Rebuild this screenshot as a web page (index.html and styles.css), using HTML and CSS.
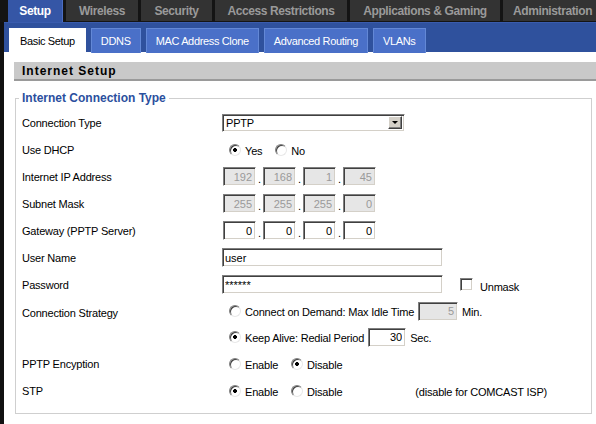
FILE: index.html
```html
<!DOCTYPE html>
<html>
<head>
<meta charset="utf-8">
<link rel="stylesheet" href="styles.css">
</head>
<body>
<div class="topbar">
  <div class="tab active t-setup">Setup</div>
  <div class="tab t-wireless">Wireless</div>
  <div class="tab t-security">Security</div>
  <div class="tab t-access">Access Restrictions</div>
  <div class="tab t-apps">Applications &amp; Gaming</div>
  <div class="tab t-admin">Administration</div>
</div>
<div class="main">
  <div class="subbar">
    <div class="subtab active">Basic Setup</div>
    <div class="subtab">DDNS</div>
    <div class="subtab">MAC Address Clone</div>
    <div class="subtab">Advanced Routing</div>
    <div class="subtab">VLANs</div>
  </div>
  <div class="content">
    <div class="section-head">Internet Setup</div>
    <fieldset class="group">
      <legend>Internet Connection Type</legend>

      <div class="row">
        <div class="label">Connection Type</div>
        <div class="value">
          <div class="select"><span class="select-text">PPTP</span><span class="select-btn"><span class="arrow"></span></span></div>
        </div>
      </div>

      <div class="row">
        <div class="label">Use DHCP</div>
        <div class="value opts">
          <label class="opt"><input type="radio" name="dhcp" checked><span>Yes</span></label>
          <label class="opt"><input type="radio" name="dhcp"><span>No</span></label>
        </div>
      </div>

      <div class="row">
        <div class="label">Internet IP Address</div>
        <div class="value ip">
          <input class="field oct" value="192" disabled><span class="dot">.</span><input class="field oct" value="168" disabled><span class="dot">.</span><input class="field oct" value="1" disabled><span class="dot">.</span><input class="field oct" value="45" disabled>
        </div>
      </div>

      <div class="row">
        <div class="label">Subnet Mask</div>
        <div class="value ip">
          <input class="field oct" value="255" disabled><span class="dot">.</span><input class="field oct" value="255" disabled><span class="dot">.</span><input class="field oct" value="255" disabled><span class="dot">.</span><input class="field oct" value="0" disabled>
        </div>
      </div>

      <div class="row">
        <div class="label">Gateway (PPTP Server)</div>
        <div class="value ip">
          <input class="field oct" value="0"><span class="dot">.</span><input class="field oct" value="0"><span class="dot">.</span><input class="field oct" value="0"><span class="dot">.</span><input class="field oct" value="0">
        </div>
      </div>

      <div class="row">
        <div class="label">User Name</div>
        <div class="value">
          <input class="field wide" value="user">
        </div>
      </div>

      <div class="row">
        <div class="label">Password</div>
        <div class="value">
          <input class="field wide" value="******">
          <label class="check"><input type="checkbox"><span>Unmask</span></label>
        </div>
      </div>

      <div class="row multi">
        <div class="label">Connection Strategy</div>
        <div class="value lines">
          <div class="line opts">
            <label class="opt"><input type="radio" name="strat"><span>Connect on Demand: Max Idle Time</span></label>
            <input class="field num idle" value="5" disabled><span class="unit">Min.</span>
          </div>
          <div class="line opts">
            <label class="opt"><input type="radio" name="strat" checked><span>Keep Alive: Redial Period</span></label>
            <input class="field num redial" value="30"><span class="unit">Sec.</span>
          </div>
        </div>
      </div>

      <div class="row">
        <div class="label">PPTP Encyption</div>
        <div class="value opts">
          <label class="opt"><input type="radio" name="enc"><span>Enable</span></label>
          <label class="opt"><input type="radio" name="enc" checked><span>Disable</span></label>
        </div>
      </div>

      <div class="row">
        <div class="label">STP</div>
        <div class="value opts">
          <label class="opt"><input type="radio" name="stp" checked><span>Enable</span></label>
          <label class="opt"><input type="radio" name="stp"><span>Disable</span></label>
          <span class="note">(disable for COMCAST ISP)</span>
        </div>
      </div>
    </fieldset>
  </div>
</div>
</body>
</html>
```
FILE: styles.css
```css
html, body {
  margin: 0;
  padding: 0;
  background: #111;
  width: 596px;
  height: 424px;
  overflow: hidden;
  font-family: "Liberation Sans", Arial, sans-serif;
  font-size: 11px;
  color: #000;
}

.topbar {
  display: flex;
  gap: 3px;
  padding-left: 8px;
  height: 22px;
  background: #141414;
  white-space: nowrap;
}

.tab {
  flex: none;
  box-sizing: border-box;
  height: 21px;
  line-height: 22px;
  text-align: center;
  background: #333;
  color: #9a9a9a;
  font-weight: bold;
  font-size: 12px;
  letter-spacing: -0.4px;
}

.tab.active {
  height: 22px;
  background: #3556a6;
  color: #fff;
  border-right: 1px solid #4b6dc2;
}

.t-setup { width: 55px; }
.t-wireless { width: 72px; }
.t-security { width: 71px; }
.t-access { width: 132px; }
.t-apps { width: 150px; }
.t-admin { width: 110px; text-align: left; padding-left: 10px; }

.main {
  margin-left: 4px;
  background: #fff;
  height: 402px;
}

.subbar {
  display: flex;
  gap: 5px;
  height: 30px;
  box-sizing: border-box;
  padding: 5px 0 0 5px;
  background: #2f519d;
  border-top: 1px solid #3a5cae;
}

.subtab {
  height: 25px;
  box-sizing: border-box;
  line-height: 24px;
  padding: 0 9px;
  background: #4a70c8;
  border: 1px solid #6388d6;
  border-bottom: none;
  color: #fff;
  white-space: nowrap;
  letter-spacing: -0.35px;
}

.subtab.active {
  padding: 0 10px;
  background: #fff;
  border-color: #fff;
  color: #000;
}

.content {
  padding: 10px 0 0 10px;
}

.section-head {
  height: 17px;
  line-height: 18px;
  padding-left: 8px;
  background: #c9c9c9;
  border-bottom: 2px solid #9a9a9a;
  font-weight: bold;
  font-size: 12px;
  letter-spacing: 1px;
}

.group {
  margin: 10px 4px 0 1px;
  padding: 4px 6px 9px 6px;
  border: 1px solid #cfcfcf;
  letter-spacing: -0.2px;
}

.group legend {
  padding: 0 3px;
  margin-left: -3px;
  color: #2b4f9e;
  font-weight: bold;
  font-size: 12px;
  line-height: 14px;
  letter-spacing: 0;
}

.row {
  display: grid;
  grid-template-columns: 200px 1fr;
  align-items: center;
  min-height: 27px;
}

.row.multi {
  align-items: start;
}

.row.multi .label {
  line-height: 26px;
  padding-top: 2px;
}

.value {
  display: flex;
  align-items: center;
}

.opts {
  gap: 13px;
  padding-left: 7px;
}

.opt {
  display: inline-flex;
  align-items: center;
  gap: 4px;
}

.opt span {
  position: relative;
  top: 1px;
}

.lines {
  flex-direction: column;
  align-items: stretch;
  padding-left: 0;
  gap: 0;
}

.line {
  display: flex;
  align-items: center;
  height: 26px;
}

.line .opt {
  margin-right: 4px;
}

.line.opts {
  gap: 0;
}

input[type="radio"] {
  appearance: none;
  margin: 0;
  width: 12px;
  height: 12px;
  border-radius: 50%;
  border: 1px solid;
  border-color: #808080 #e8e8e8 #e8e8e8 #808080;
  box-shadow: inset 1px 1px 0 #404040;
  background: #fff;
  box-sizing: border-box;
}

input[type="radio"]:checked {
  background: radial-gradient(circle at 50% 50%, #000 0, #000 1.6px, #fff 2.2px);
}

input[type="checkbox"] {
  appearance: none;
  margin: 0;
  width: 13px;
  height: 13px;
  border: 1px solid;
  border-color: #808080 #fff #fff #808080;
  box-shadow: inset 1px 1px 0 #404040, inset -1px -1px 0 #d4d0c8;
  background: #fff;
  box-sizing: border-box;
}

.check {
  display: inline-flex;
  align-items: center;
  gap: 7px;
  margin-left: 17px;
}

.check span {
  position: relative;
  top: 2px;
}

.field {
  box-sizing: border-box;
  height: 19px;
  margin: 0;
  padding: 0 3px;
  border: 1px solid;
  border-color: #7f7f7f #fff #fff #7f7f7f;
  box-shadow: inset 1px 1px 0 #404040, inset -1px -1px 0 #d4d0c8;
  background: #fff;
  font-family: "Liberation Sans", Arial, sans-serif;
  font-size: 11px;
  color: #000;
  outline: none;
}

.field:disabled {
  background: #e6e6e6;
  color: #9a9a9a;
}

.ip {
  padding-left: 1px;
}

.oct {
  width: 33px;
  text-align: right;
}

.dot {
  width: 7px;
  text-align: center;
  align-self: flex-end;
  line-height: 14px;
}

.wide {
  width: 221px;
  padding-left: 2px;
}

.num {
  width: 40px;
  text-align: right;
}

.redial {
  width: 38px;
}

.unit {
  margin-left: 4px;
  position: relative;
  top: 1px;
}

.select {
  box-sizing: border-box;
  display: flex;
  align-items: center;
  width: 183px;
  height: 18px;
  border: 1px solid;
  border-color: #7f7f7f #fff #fff #7f7f7f;
  box-shadow: inset 1px 1px 0 #404040, inset -1px -1px 0 #d4d0c8;
  background: #fff;
  padding: 2px 2px 2px 3px;
}

.select-text {
  flex: 1;
}

.select-btn {
  box-sizing: border-box;
  width: 14px;
  height: 13px;
  background: #d4d0c8;
  border: 1px solid;
  border-color: #fff #404040 #404040 #fff;
  box-shadow: inset -1px -1px 0 #808080;
  display: flex;
  align-items: center;
  justify-content: center;
}

.arrow {
  width: 0;
  height: 0;
  border-left: 3px solid transparent;
  border-right: 3px solid transparent;
  border-top: 3px solid #000;
}

.note {
  margin-left: 60px;
  position: relative;
  top: 1px;
}
```
